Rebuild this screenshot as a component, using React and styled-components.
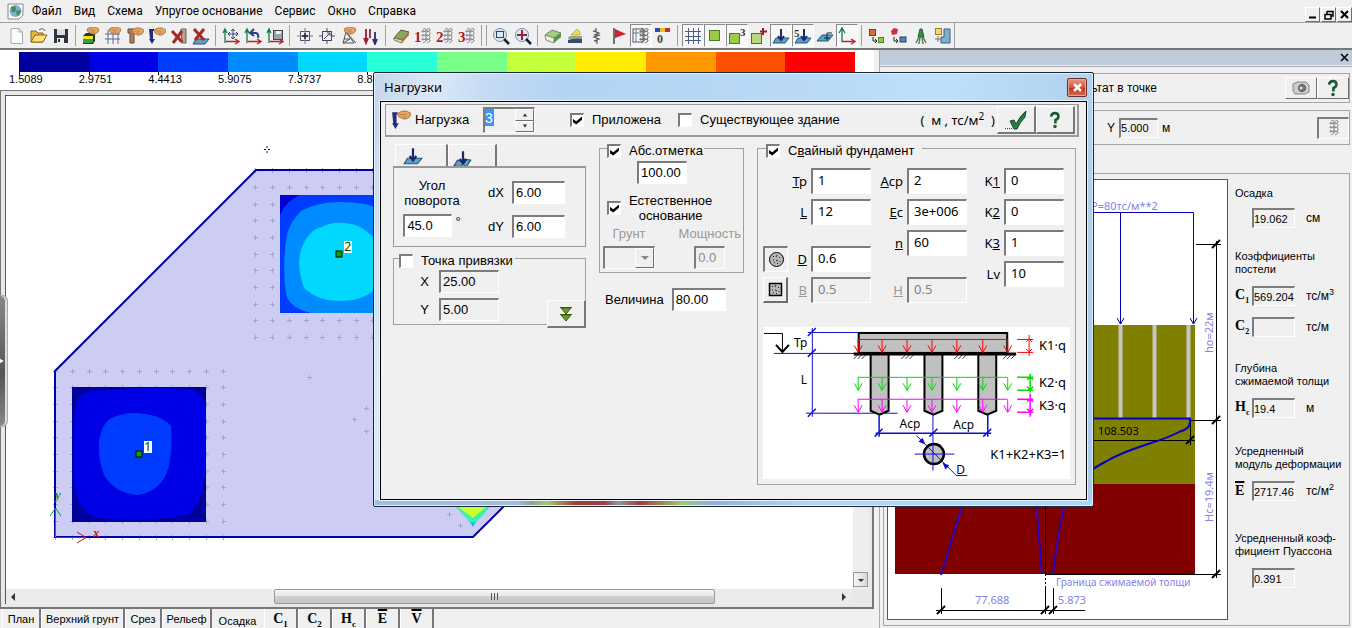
import React from 'react';
import styled, { createGlobalStyle, css } from 'styled-components';

const face = '#f0f0f0';
const sans = '"Liberation Sans", Arial, sans-serif';
const humanist = '"Noto Sans", "Segoe UI", sans-serif';

const GlobalStyle = createGlobalStyle`
  *, *::before, *::after { box-sizing: border-box; }
  body { margin: 0; background: ${face}; color: #000; font: 12px/14px ${sans}; overflow: hidden; }
  button, input, select { font: inherit; color: inherit; margin: 0; border-radius: 0; }
  svg { display: block; flex: none; }
`;

/* ---------- window chrome ---------- */

const Page = styled.div`
  position: relative;
  display: flex;
  flex-direction: column;
  height: 100vh;
`;

const MenuBar = styled.header`
  display: flex;
  align-items: center;
  height: 22px;
  padding-left: 7px;
  font: 12px/16px Roboto, "Segoe UI", sans-serif;
`;

const MenuList = styled.nav`
  display: flex;
  flex: 1;
  gap: 12px;
  margin-left: 8px;
`;

const MenuItem = styled.button`
  padding: 0;
  border: 0;
  background: none;
  white-space: nowrap;
`;

const WindowButtons = styled.div`
  display: flex;
  gap: 1px;
  align-self: flex-end;
`;

const raised = css`
  border: 1px solid;
  border-color: #fff #6e6e6e #6e6e6e #fff;
  background: ${face};
`;

const sunken = css`
  border-style: solid;
  border-width: 2px 1px 1px 2px;
  border-color: #7c7c7c #fff #fff #7c7c7c;
`;

const WindowButton = styled.button`
  ${raised}
  display: grid;
  place-items: center;
  width: 15px;
  height: 15px;
  padding: 0;
`;

const Toolbar = styled.div`
  display: flex;
  height: 28px;
  padding-left: 6px;
  border-top: 1px solid #a0a0a0;
  border-bottom: 2px solid #777;
`;

const ToolButton = styled.button`
  display: grid;
  place-items: center;
  width: 22px;
  height: 23px;
  margin-top: 1px;
  padding: 0;
  border: 1px solid transparent;
  background: none;
  ${(p) => p.$pressed && css`
    border-color: #8a8a8a #fff #fff #8a8a8a;
    background: #f7f7f7;
  `}
`;

const ToolSeparator = styled.i`
  width: ${(p) => (p.$wide ? '12px' : '8px')};
  padding: 2px 0;
  &::before {
    content: '';
    display: block;
    width: ${(p) => (p.$wide ? '6px' : '1px')};
    height: 21px;
    margin-left: 3px;
    border-left: 1px solid #a0a0a0;
    border-right: ${(p) => (p.$wide ? '1px solid #a0a0a0' : '0')};
  }
`;

const ToolEnd = styled.i`
  border-left: 1px solid #a0a0a0;
`;

/* ---------- workspace ---------- */

const Main = styled.main`
  display: flex;
  flex: 1;
  min-height: 0;
`;

const Workspace = styled.section`
  position: relative;
  display: flex;
  flex: 1;
  flex-direction: column;
  min-width: 0;
  padding-right: 5px;
`;

const Legend = styled.div`
  display: grid;
  grid-template-columns: repeat(12, 1fr);
  height: 40px;
  padding: 2px 19px 0;
  background: #fff;
`;

const LegendCell = styled.div`
  height: 20px;
  padding-top: 20px;
  background: ${(p) => p.$color};
`;

const LevelMark = styled.span`
  display: block;
  margin-left: -10px;
  background: linear-gradient(#000, #000) 10px 0 / 1px 3px no-repeat;
  font: 11px/14px ${sans};
`;

const PlanFrame = styled.div`
  display: flex;
  flex: 1;
  flex-direction: column;
  min-height: 0;
  padding: 4px 3px 3px 4px;
  border: solid #777;
  border-width: 1px 2px 2px 1px;
  background: #e8e8e8;
`;

const PlanView = styled.div`
  display: grid;
  grid-template-columns: 1fr 16px;
  grid-template-rows: 1fr 15px;
  flex: 1;
  min-height: 0;
  border: solid #555;
  border-width: 1px 0 0 1px;
`;

const PlanCanvas = styled.div`
  min-width: 0;
  min-height: 0;
  overflow: hidden;
  background: #fff;
`;

const VerticalScroll = styled.div`
  display: flex;
  align-items: flex-end;
  padding-bottom: 2px;
  background: #ededed;
`;

const ScrollArrow = styled.button`
  display: grid;
  place-items: center;
  width: ${(p) => (p.$framed ? '15px' : '14px')};
  height: 15px;
  padding: 0;
  border: ${(p) => (p.$framed ? '1px solid #989898' : '0')};
  background: ${(p) => (p.$framed ? 'linear-gradient(90deg, #f6f6f6, #d8d8d8)' : 'none')};
`;

const HorizontalScroll = styled.div`
  display: flex;
  justify-content: space-between;
  padding-right: 2px;
  background: #ebebeb;
`;

const ScrollTrack = styled.div`
  display: grid;
  grid-template-columns: 253fr 440fr 122fr;
  flex: 1;
`;

const ScrollThumb = styled.div`
  display: flex;
  grid-column: 2;
  align-items: center;
  justify-content: center;
  gap: 2px;
  border: 1px solid #989898;
  border-radius: 2px;
  background: linear-gradient(#f5f5f5, #e6e6e6 50%, #cfcfcf 50%, #c6c6c6);
`;

const Grip = styled.i`
  width: 1px;
  height: 7px;
  background: #555;
`;

const Tabs = styled.div`
  display: flex;
  height: 19px;
  padding-left: 2px;
  background: ${face};
`;

const Tab = styled.button`
  display: flex;
  align-items: center;
  justify-content: center;
  width: ${(p) => p.$width};
  padding: ${(p) => (p.$active ? '4px 0 0' : '1px 0 0')};
  border: solid;
  border-width: 0 2px 0 1px;
  border-color: ${(p) => (p.$active ? face : '#777 #777 #777 #fff')};
  background: ${face};
  white-space: nowrap;
  font: ${(p) => (p.$symbol ? 'bold 14px/16px "Liberation Serif", serif' : `11px/16px ${sans}`)};
  sub { font-size: 9px; line-height: 8px; align-self: flex-end; }
`;

const Overline = styled.span`
  text-decoration: overline;
  text-decoration-thickness: 2px;
`;

const Splitter = styled.button`
  position: absolute;
  top: 245px;
  left: 0;
  display: grid;
  place-items: center start;
  width: 8px;
  height: 132px;
  padding: 0;
  border: 1px solid #aaa;
  border-left: 0;
  border-radius: 0 6px 6px 0;
  box-shadow: inset -2px 0 #ddd;
  background: linear-gradient(#888, #555 60%, #888);
`;

/* ---------- result panel ---------- */

const Panel = styled.aside`
  display: flex;
  flex: 0 0 473px;
  flex-direction: column;
  min-width: 0;
  border-left: 1px solid #aaa;
  background: ${face};
`;

const PanelHeader = styled.div`
  display: flex;
  justify-content: flex-end;
  height: 15px;
  padding-right: 2px;
  background: #bfcbd9;
`;

const CloseButton = styled.button`
  display: grid;
  place-items: center;
  width: 11px;
  height: 15px;
  padding: 0;
  border: 0;
  background: none;
`;

const PanelBody = styled.div`
  display: flex;
  flex: 1;
  flex-direction: column;
  min-height: 0;
  margin-top: 1px;
  padding: 6px 2px 2px 3px;
  border-top: 1px solid #aaa;
`;

const PanelBar = styled.div`
  display: flex;
  align-items: center;
  justify-content: flex-end;
  height: ${(p) => p.$height};
  margin-bottom: ${(p) => p.$after};
  border: 1px solid #a5a5a5;
`;

const PanelTitle = styled.span`
  margin-right: 128px;
`;

const PanelButton = styled.button`
  ${raised}
  ${(p) => p.$pressed && sunken}
  display: grid;
  place-items: center;
  width: 32px;
  height: 22px;
  padding: 0;
`;

const Coordinate = styled.label`
  display: flex;
  align-items: center;
  gap: 4px;
  margin-right: auto;
  margin-left: 223px;
`;

const Readout = styled.input`
  ${sunken}
  width: ${(p) => p.$width || '43px'};
  height: 20px;
  padding: 0;
  background: ${face};
  font: 11px/16px ${sans};
`;

const ResultBox = styled.div`
  display: flex;
  flex: 1;
  min-height: 0;
  padding: 5px 0 5px 3px;
  border: 1px solid #a5a5a5;
`;

const PlotFrame = styled.div`
  flex: 1;
  min-width: 0;
  overflow: hidden;
  border: 1px solid #555;
  background: #fff;
`;

const Results = styled.div`
  display: flex;
  flex: 0 0 121px;
  flex-direction: column;
  padding: 8px 0 0 7px;
`;

const ResultGroup = styled.div`
  display: flex;
  flex-direction: column;
  margin-bottom: ${(p) => p.$after};
`;

const ResultTitle = styled.div`
  margin-bottom: ${(p) => (p.$tight ? '8px' : '10px')};
  font: 11px/13px ${sans};
  white-space: pre;
`;

const ResultRow = styled.label`
  display: grid;
  grid-template-columns: 17px 43px 1fr;
  align-items: center;
  height: 20px;
  & + & { margin-top: 11px; }
`;

const Symbol = styled.span`
  font: bold 14px/16px "Liberation Serif", serif;
  white-space: nowrap;
  sub { font-size: 8px; line-height: 8px; }
`;

const Unit = styled.span`
  padding-left: 11px;
  font: 12px/16px ${sans};
  white-space: nowrap;
  sup { font-size: 9px; line-height: 8px; }
`;

/* ---------- loads dialog ---------- */

const Dialog = styled.section`
  position: absolute;
  top: 72px;
  left: 373px;
  display: flex;
  flex-direction: column;
  width: 721px;
  padding: 0 6px 6px;
  border: 1px solid #1b2836;
  border-radius: 2px;
  box-shadow: inset 0 0 0 1px #dcf0ff;
  background:
    linear-gradient(90deg, #a3bbe0 0 20%, #8fa08f 22%, #a4c878 24%, #a03c3c 28% 32%, #8a9a9a 34%, #a03c3c 37%, #a4c878 43%, #8fb0dc 47%, #aed4f8 60% 100%) 0 100% / 100% 6px no-repeat,
    linear-gradient(100deg, #c5d6ea 0, #dbe9f8 8%, #c6dbf3 14%, #b4d4f3 24%, #b9d9f7 55%, #bfe0fb 72%, #a9c9e6 100%);
  font: 13px/16px ${sans};
`;

const DialogTitle = styled.header`
  display: flex;
  align-items: center;
  justify-content: space-between;
  height: 28px;
  padding-left: 4px;
  font: 13px/18px ${humanist};
`;

const DialogClose = styled.button`
  display: grid;
  place-items: center;
  width: 20px;
  height: 19px;
  padding: 0;
  border: 1px solid #6b2f2a;
  border-radius: 2px;
  box-shadow: inset 0 0 0 1px #eba292;
  background: linear-gradient(#e59a89, #d05538 50%, #bb3418 50%, #d96a50);
`;

const DialogBody = styled.form`
  height: 399px;
  padding: 2px 7px 0 4px;
  border: 1px solid #000;
  box-shadow: 0 0 0 1px #e8f4fc;
  background: ${face};
`;

const LoadBar = styled.div`
  display: flex;
  align-items: center;
  height: 33px;
  padding: 0 2px 0 5px;
  border: solid;
  border-width: 1px 2px 2px 1px;
  border-color: #999;
`;

const LoadNumber = styled.label`
  display: flex;
  align-items: center;
  gap: 4px;
  width: 179px;
`;

const SpinBox = styled.span`
  ${sunken}
  display: flex;
  align-items: flex-start;
  justify-content: space-between;
  width: 52px;
  height: 26px;
  margin-left: auto;
  margin-right: 35px;
`;

const SpinInput = styled.input`
  width: 9px;
  height: 17px;
  padding: 0;
  border: 0;
  background: #3a93ff;
  color: #fff;
  font: 14px/16px ${sans};
`;

const SpinButtons = styled.span`
  display: grid;
  grid-template-rows: 1fr 1fr;
  width: 19px;
  height: 23px;
`;

const SpinButton = styled.button`
  ${raised}
  display: grid;
  place-items: center;
  padding: 0;
`;

const Check = styled.label`
  display: flex;
  align-items: center;
  gap: 8px;
  margin-right: ${(p) => p.$after || '0'};
  white-space: nowrap;
  text-align: center;
`;

const Tick = styled.input.attrs({ type: 'checkbox' })`
  ${sunken}
  appearance: none;
  display: grid;
  place-items: center;
  flex: none;
  width: 14px;
  height: 14px;
  background: #fff;
  &:checked::before {
    content: '';
    width: 9px;
    height: 8px;
    background: #000;
    clip-path: polygon(0 30%, 36% 58%, 100% 0, 100% 40%, 36% 100%, 0 72%);
  }
`;

const UnitsNote = styled.span`
  margin-right: 2px;
  margin-left: auto;
  white-space: pre;
  font: 13px/18px ${humanist};
  sup { font-size: 10px; line-height: 10px; }
`;

const BarButton = styled.button`
  display: grid;
  place-items: center;
  width: 39px;
  height: 28px;
  padding: 0;
  border: solid;
  border-width: 1px 2px 2px 1px;
  border-color: #fff #777 #777 #fff;
  background: ${face};
`;

const DialogColumns = styled.div`
  display: grid;
  grid-template-columns: 193px 145px 1fr;
  gap: 13px;
  padding: 0 3px 0 8px;
`;

const Column = styled.div`
  position: relative;
  display: flex;
  flex-direction: column;
`;

const FormTabs = styled.div`
  display: flex;
  height: 29px;
  padding: 7px 0 0 2px;
`;

const FormTab = styled.button`
  display: grid;
  place-items: center;
  width: ${(p) => (p.$active ? '53px' : '49px')};
  padding: ${(p) => (p.$active ? '0 16px 0 0' : '4px 18px 0 0')};
  border: solid;
  border-width: 1px 2px 0 1px;
  border-color: #fff #777 #fff #fff;
  background: ${face};
`;

const FormPage = styled.div`
  display: flex;
  justify-content: space-between;
  height: 81px;
  padding: 10px 20px 0 2px;
  border: solid #999;
  border-width: 2px 1px 1px;
`;

const Angle = styled.label`
  display: flex;
  flex-direction: column;
  align-items: center;
  gap: 6px;
  width: 72px;
  line-height: 15px;
  text-align: center;
`;

const AngleValue = styled.span`
  display: flex;
  gap: 3px;
  line-height: 16px;
`;

const Stack = styled.div`
  display: flex;
  flex-direction: column;
  gap: ${(p) => p.$gap};
  padding-top: ${(p) => p.$before || '0'};
`;

const Field = styled.label`
  display: flex;
  align-items: center;
  justify-content: flex-end;
  gap: ${(p) => p.$gap || '8px'};
  white-space: nowrap;
`;

const TextBox = styled.input`
  ${sunken}
  width: ${(p) => p.$width};
  height: 23px;
  padding: 0 0 2px 2px;
  background: #fff;
  line-height: 16px;
  &:disabled, &:read-only { background: ${face}; }
  &:disabled { color: #8c8c8c; }
`;

const Group = styled.fieldset`
  min-width: 0;
  height: ${(p) => p.$height};
  margin: 0;
  padding: ${(p) => p.$pad};
  border: 1px solid #a0a0a0;
`;

const GroupLegend = styled.legend`
  height: 22px;
  margin-left: ${(p) => p.$inset};
  padding: 6px ${(p) => p.$after || '2px'} 0 0;
`;

const ExpandButton = styled(BarButton)`
  position: absolute;
  top: 163px;
  right: 0;
`;

const ElevationBody = styled.div`
  display: flex;
  flex-direction: column;
  align-items: flex-start;
  padding-top: 2px;
`;

const Elevation = styled(TextBox)`
  margin-left: 34px;
`;

const CheckBlock = styled.div`
  margin: 9px 0 4px 4px;
  line-height: 15px;
`;

const Soil = styled.div`
  display: flex;
  justify-content: space-between;
  align-self: stretch;
  padding-right: 2px;
`;

const SoilField = styled.label`
  display: flex;
  flex-direction: column;
  gap: 5px;
  align-items: center;
  line-height: 14px;
  color: #999;
`;

const SoilSelect = styled.select`
  ${sunken}
  appearance: none;
  width: 52px;
  height: 23px;
  background: ${face};
  opacity: 1;
`;

const SelectWrap = styled.span`
  display: grid;
  grid-template-columns: 1fr 20px;
  > select { grid-area: 1 / 1 / 2 / 3; }
  > i {
    ${raised}
    grid-area: 1 / 2;
    display: grid;
    place-items: center;
    margin: 2px 1px 1px 0;
    pointer-events: none;
  }
`;

const Magnitude = styled.div`
  display: flex;
  margin: 15px 0 0 6px;
`;

const PileFields = styled.div`
  display: flex;
  font: 13px/18px ${humanist};
`;

const PileColumn = styled.div`
  display: flex;
  flex-direction: column;
  gap: 5px;
  width: ${(p) => p.$width};
`;

const PileRow = styled.div`
  display: flex;
  align-items: center;
  height: 26px;
  margin-top: ${(p) => (p.$apart ? '16px' : '0')};
`;

const PileField = styled.label`
  display: flex;
  flex: 1;
  align-items: center;
  justify-content: flex-end;
  gap: 4px;
  color: ${(p) => (p.$muted ? '#999' : '#000')};
`;

const PileInput = styled.input`
  ${sunken}
  width: 60px;
  height: 26px;
  padding: 0 0 3px 5px;
  background: #fff;
  &:disabled { background: ${face}; color: #808080; }
`;

const ShapeButton = styled.button`
  ${raised}
  border-width: 1px 2px 2px 1px;
  ${(p) => p.$pressed && sunken}
  display: grid;
  place-items: center;
  width: 25px;
  height: 26px;
  padding: 0;
`;

const PileDiagram = styled.div`
  margin-top: 24px;
  background: #fff;
`;

/* ---------- toolbar icons ---------- */

const Hand = ({ x = 5, y = 0 }) => (
  <g transform={`translate(${x} ${y})`}>
    <path d="M0 2Q4-1 8 0L12 2 11 5Q8 8 5 7L1 5Z" fill="#e9a766" stroke="#9c602e" strokeWidth=".7" />
    <path d="M2 3L8 3M4 5L8 5" stroke="#b5763c" strokeWidth=".7" />
  </g>
);
const Spring = ({ x = 0, color = '#888' }) => (
  <path transform={`translate(${x} 1)`} d="M2 1Q6 0 5 2T1 4Q0 2 3 3T5 6T1 8Q0 6 3 7T5 10T1 12Q0 10 3 11T5 13T2 15" fill="none" stroke={color} />
);
const Axes = () => <path d="M3 16V3M1 6L3 2 5 6" fill="none" stroke="#167a45" strokeWidth="1.3" />;
const RedAxis = () => <path d="M4 14.5H16M13 12L17 14.5 13 17" fill="none" stroke="#c02030" strokeWidth="1.3" />;
const NumberSpring = ({ n }) => (
  <>
    <text x="0" y="15" fontFamily="Liberation Serif" fontWeight="bold" fontSize="15" fill="#b01828">{n}</text>
    <Spring x={7} /><Spring x={11} />
  </>
);
const Pane = ({ y = 0 }) => <path transform={`translate(0 ${y})`} d="M4 10H17L13 15H1Z" fill="#5e9fca" stroke="#25557c" />;
const GreenBox = ({ x, y, s }) => <rect x={x} y={y} width={s} height={s} fill="#9ccb4c" stroke="#4d7d1e" />;

const toolArt = {
  page: <path d="M3 1.5H11L14.5 5V16.5H3ZM11 1.5V5H14.5" fill="#fcfcfc" stroke="#aaa" />,
  open: <><path d="M1 15V4H6L8 6H13V15Z" fill="#e9b63c" stroke="#8b671a" /><path d="M1 15L5 8H17L13 15Z" fill="#ffdf7a" stroke="#8b671a" /><path d="M9 3Q13 0 15 4" fill="none" stroke="#555" /></>,
  save: <><rect x="2" y="2" width="14" height="14" fill="#30343d" /><rect x="5" y="2" width="8" height="6" fill="#d9dfe6" /><rect x="5" y="11" width="7" height="5" fill="#eee" /><rect x="6" y="12" width="2" height="3" fill="#333" /></>,
  layer: <><path d="M1 9L4 6H13V14L11 17H1Z" fill="#1f3b1f" /><rect x="1" y="9" width="10" height="3" fill="#f1e02b" /><rect x="1" y="12" width="10" height="4" fill="#3e9a42" /><Hand /></>,
  gridHand: <><path d="M4 3V17M9 7V17M14 7V17M1 7H16M1 12H16" stroke="#5a6d8a" /><Hand /></>,
  poleHand: <><path d="M2 2H8V16H4V6H2Z" fill="#b77a5c" stroke="#553" /><Hand x={6} y={1} /></>,
  pinHand: <><path d="M1 2H6V4H5V12H7L4 17 1 12H2Z" fill="#2b2b7d" /><Hand x={6} y={1} /></>,
  noPole: <><path d="M11 2H16V16H12Z" fill="#b9a08f" stroke="#665" /><path d="M2 4L12 15M12 4L3 16" stroke="#a82828" strokeWidth="3" /></>,
  noPane: <><Pane y={2} /><path d="M2 2L12 13M12 2L3 13" stroke="#a82828" strokeWidth="3" /></>,
  axisMove: <><Axes /><RedAxis /><path d="M11 2V12M6 7H16M9 4L11 2 13 4M9 10L11 12 13 10M8 5L6 7 8 9M14 5L16 7 14 9" fill="none" stroke="#2b4a7c" /></>,
  axisTurn: <><Axes /><RedAxis /><path d="M7 6H12Q15 7 14 11M10 2L6 6 10 9" fill="none" stroke="#24418d" strokeWidth="2" /></>,
  axisSave: <><Axes /><RedAxis /><rect x="7.5" y="3.5" width="9" height="9" fill="#9aa3ad" stroke="#444" /><rect x="10" y="4" width="5" height="3" fill="#eee" /></>,
  target: <><rect x="4.5" y="4.5" width="9" height="9" fill="none" stroke="#556" /><path d="M9 1V17M1 9H17" stroke="#778" /><path d="M6 9H12M9 6V12" stroke="#223" strokeWidth="1.5" /></>,
  scale: <><rect x="4.5" y="4.5" width="9" height="9" fill="none" stroke="#446" /><path d="M9 1V5M9 13V17M1 9H5M13 9H17M6 12L12 6M9 6H12V9" fill="none" stroke="#446" /></>,
  frameHand: <><path d="M3 16L6 5 14 16ZM4 12H10L3 16M6 5L16 16" fill="none" stroke="#555" /><Hand x={4} /></>,
  arrows: <><path d="M4 2V14M2 11L4 16 6 11M8 2V11" fill="none" stroke="#a01c2c" strokeWidth="1.8" /><path d="M13 5V15M11 12L13 17 15 12" fill="none" stroke="#2b2b7d" strokeWidth="1.8" /></>,
  eraser: <><path d="M2 11L9 3 17 5 11 13Z" fill="#8fa45c" stroke="#495a2b" /><path d="M2 11L10 13 10 16 2 13Z" fill="#e8e2c0" stroke="#776" /><path d="M10 13L17 5V8L10 16Z" fill="#a67748" /></>,
  s1: <NumberSpring n="1" />, s2: <NumberSpring n="2" />, s3: <NumberSpring n="3" />,
  zoomBox: <><circle cx="8" cy="8" r="6.5" fill="#dce8f6" stroke="#7890b0" /><rect x="4.5" y="4.5" width="7" height="6" fill="none" stroke="#345" /><path d="M12 12L17 17" stroke="#123" strokeWidth="2.5" /></>,
  zoomAll: <><circle cx="8" cy="8" r="6.5" fill="#dce8f6" stroke="#7890b0" /><path d="M8 3V13M3 8H13" stroke="#a02040" strokeWidth="2" /><path d="M12 12L17 17" stroke="#123" strokeWidth="2.5" /></>,
  block: <><path d="M1 8L8 3 17 6 10 11Z" fill="#a4cc86" stroke="#6b8b55" /><path d="M1 8L10 11V16L2 13Z" fill="#f1f1e4" stroke="#888" /><path d="M10 11L17 6V10L10 16Z" fill="#5c9250" /></>,
  strata: <><path d="M8 5L11 2 14 5V8H5Z" fill="#f4d94a" stroke="#887" strokeWidth=".6" /><path d="M3 9H16V12Q9 14 2 12Z" fill="#94a97c" /><path d="M2 13Q9 11 16 12V16H2Z" fill="#334a7b" /></>,
  coil: <path d="M8 1V4H5L11 6 6 8H12L6 10 11 12 6 14H9V17" fill="none" stroke="#555" strokeWidth="1.2" />,
  flag: <><path d="M4 1V17" stroke="#444" strokeWidth="1.5" /><path d="M5 2L16 7 5 11Z" fill="#d51e2e" /></>,
  springs: <><rect x="1" y="2" width="10" height="13" fill="none" stroke="#557" /><path d="M1 6H11M4 2V15" stroke="#778" /><Spring x={7} color="#666" /><Spring x={11} color="#666" /></>,
  scaleBar: <><rect x="1" y="1" width="5" height="4" fill="#3446b2" /><rect x="6" y="1" width="5" height="4" fill="#e3c42c" /><rect x="11" y="1" width="5" height="4" fill="#c83030" /><text x="3" y="16" fontFamily="Liberation Serif" fontWeight="bold" fontSize="12" fill="#444">0</text></>,
  grid: <path d="M4.5 1V17M9.5 1V17M14.5 1V17M1 4.5H17M1 9.5H17M1 13.5H17" stroke="#4a5a80" />,
  box: <GreenBox x={3.5} y={3.5} s={10} />,
  box3: <><GreenBox x={1.5} y={6.5} s={10} /><text x="12" y="9" fontSize="11" fontFamily="Liberation Serif" fontWeight="bold" fill="#333">3</text></>,
  boxPlus: <><rect x="1.5" y="6.5" width="10" height="10" fill="#b7d87f" stroke="#b33b22" /><path d="M13 1V8M10 4.5H17" stroke="#9b1c22" strokeWidth="2" /></>,
  load: <><Pane y={1} /><path d="M9 2V12M6 9L9 13 12 9" fill="none" stroke="#1b2a68" strokeWidth="2" /></>,
  splitLoad: <><path d="M4 10L8 11 10 9 16 10 12 16 9 14 6 16 1 15Z" fill="#5e9fca" stroke="#25557c" /><path d="M9 2V12M6 9L9 13 12 9" fill="none" stroke="#1b2a68" strokeWidth="2" /></>,
  load5: <><Pane y={1} /><text x="0" y="10" fontSize="11" fontFamily="Liberation Serif" fontWeight="bold" fill="#333">5</text><path d="M10 2V12M7 9L10 13 13 9" fill="none" stroke="#1b2a68" strokeWidth="2" /></>,
  pane: <><path d="M6 8H17L12 14H1Z" fill="#5e9fca" stroke="#25557c" /><path d="M8 11H14M11 6V13M11 6H16" stroke="#123" /></>,
  axes: <><path d="M4 15V2M1 6L4 1 7 6" fill="none" stroke="#167a45" strokeWidth="1.3" /><RedAxis /></>,
  swap1: <><rect x="1.5" y="2.5" width="6" height="6" fill="#d96c3c" stroke="#a22" /><path d="M5 10V14H9M7 12L9 14 7 16" fill="none" stroke="#222" /><GreenBox x={10.5} y={10.5} s={5} /></>,
  swap2: <><path d="M1 4L4 1 8 2 7 7 2 8Z" fill="#cf3040" /><path d="M4 10V14H8M6 12L8 14 6 16" fill="none" stroke="#222" /><rect x="10" y="10" width="6" height="5" fill="#4a8ab4" stroke="#245" /></>,
  brush: <><path d="M8 2H10L12 10H6Z" fill="#3d8a49" stroke="#25632f" /><path d="M7 10L4 16M8 10L7 17M10 10L11 17M11 10L14 16" stroke="#5d7f5a" strokeWidth="1.5" /></>,
  parts: <><rect x="1.5" y="1.5" width="6" height="6" fill="#f5d579" stroke="#a6772a" /><path d="M10 2H16V16H7V10H10Z" fill="#7fafcd" stroke="#35637f" /><path d="M4 9V15M1 12H7" stroke="#777" /></>,
};

const tools = [
  ['page', 'open', 'save'],
  ['layer', 'gridHand', 'poleHand', 'pinHand', 'noPole', 'noPane'],
  ['axisMove', 'axisTurn', 'axisSave'],
  ['target', 'scale', 'frameHand', 'arrows'],
  ['eraser', 's1', 's2', 's3'],
  ['zoomBox', 'zoomAll'],
  ['block', 'strata', 'coil', 'flag', 'springs', 'scaleBar'],
  ['grid', 'box', 'box3', 'boxPlus', 'load', 'load5', 'pane', 'axes'],
  ['swap1', 'swap2', 'brush', 'parts'],
];
const pressedTools = new Set(['springs', 'grid', 'box', 'box3', 'load', 'load5', 'axes']);

const Icon = ({ name, size = 18 }) => (
  <svg width={size} height={size} viewBox="0 0 18 18" aria-hidden="true">{toolArt[name]}</svg>
);

const Cross = ({ size = 9, width = 2, color = '#000' }) => (
  <svg width={size} height={size} viewBox="0 0 9 9"><path d="M1 1L8 8M8 1L1 8" stroke={color} strokeWidth={width} /></svg>
);

const Arrow = ({ d, color = '#333', size = 8 }) => (
  <svg width={size} height={size} viewBox="0 0 8 8"><path d={d} fill={color} /></svg>
);

const Question = () => (
  <svg width="12" height="18" viewBox="0 0 14 20">
    <path d="M2.5 6Q3 2 7 2T11 6Q11 9 7.5 10V14" fill="none" stroke="#1d5a35" strokeWidth="3" />
    <circle cx="7" cy="17.5" r="2" fill="#1d5a35" />
  </svg>
);

/* ---------- drawings ---------- */

const colors = ['#0000a0', '#0000e6', '#003cff', '#008cff', '#00d8ff', '#28ffd8', '#78ff88', '#c4ff3c', '#ffec00', '#ff9800', '#ff5000', '#ff0000'];
const levels = ['1.5089', '2.9751', '4.4413', '5.9075', '7.3737', '8.8'];

const gridPoints = [];
const lowerX = [55, 72, 89, 105, 122, 139, 156, 172, 189, 206, 223];
const lowerY = [371, 387, 404, 421, 437, 454, 471, 487, 504, 521, 537];
lowerY.forEach((y) => lowerX.forEach((x) => gridPoints.push([x, y])));
const upperX = [255, 272, 289, 306, 322, 339, 356, 372];
const upperY = [170, 187, 204, 220, 237, 254, 270, 287, 304, 320, 337];
upperY.forEach((y) => upperX.forEach((x) => gridPoints.push([x, y])));
gridPoints.push([309, 377], [366, 408], [354, 419], [366, 431], [449, 514], [460, 525]);

const Marker = ({ x, y, n }) => (
  <>
    <rect x={x - 3} y={y - 3} width="6" height="6" fill="#0a0" stroke="#000" />
    <rect x={x + 5} y={y - 13} width="8" height="12" fill="#fff" />
    <text x={x + 5} y={y - 3} fontFamily="Noto Sans" fontSize="13" fill="#065006">{n}</text>
  </>
);

const Plan = () => (
  <svg width="846" height="490" viewBox="6 96 846 490">
    <path d="M55 537V371L256 170H600V411L473 537Z" fill="#ccccf5" />
    {gridPoints.map(([x, y]) => (
      <path key={`${x}-${y}`} d={`M${x - 2} ${y + 0.5}H${x + 3}M${x + 0.5} ${y - 2}V${y + 3}`} stroke="#a4a4cc" />
    ))}
    <path d="M55 537V371L256 170H600V411L473 537Z" fill="none" stroke="#0000a8" strokeWidth="2" />
    <path d="M264 149.5H270M267 146V153" stroke="#0000a0" />
    <rect x="266" y="148" width="2" height="3" fill="#fff" />
    <rect x="72" y="387" width="134" height="135" fill="#00009c" />
    <path d="M92 391Q140 386 185 389Q204 389 205 410V470Q202 505 188 515Q140 523 92 517Q77 506 74 485Q72 440 76 405Q78 393 92 391Z" fill="#0000e6" />
    <path d="M136 413Q160 414 171 426Q173 460 165 477Q155 493 137 495Q115 493 104 475Q98 460 99 442Q102 422 112 418Q122 413 136 413Z" fill="#003cff" />
    <rect x="280" y="195" width="118" height="118" fill="#003cff" />
    <path d="M280 195H300Q287 200 280 215Z" fill="#0000d0" />
    <path d="M339 202Q365 202 376 208V313H312Q290 309 286 294Q282 265 287 235Q290 222 301 211Q318 202 339 202Z" fill="#008cff" />
    <path d="M343 223Q360 223 374 238V290Q362 301 340 301Q318 301 304 288Q296 265 301 250Q308 230 322 227Q332 222 343 223Z" fill="#00d8ff" />
    <path d="M456 507H490L473 526Z" fill="#3df0b0" />
    <path d="M458 507H486L473 518Z" fill="#c8ff30" />
    <path d="M470 522H476L473 527Z" fill="#10c8e8" />
    <Marker x={139} y={454} n="1" />
    <Marker x={339} y={254} n="2" />
    <path d="M55.5 537V508M50 516L55.5 508 61 516" fill="none" stroke="#0a9a2a" />
    <path d="M55 537.5H86M77 532L86 537.5 77 543" fill="none" stroke="#d01010" />
    <text x="55" y="499" fontFamily="Liberation Serif" fontStyle="italic" fontWeight="bold" fontSize="13" fill="#0a9a2a">y</text>
    <text x="93" y="537" fontFamily="Liberation Serif" fontStyle="italic" fontWeight="bold" fontSize="13" fill="#d01010">x</text>
  </svg>
);

const Ticks = ({ points, color = '#000', width = 2 }) => points.map(([x, y]) => (
  <path key={`${x}-${y}`} d={`M${x - 4} ${y + 4}L${x + 4} ${y - 4}`} stroke={color} strokeWidth={width} />
));

const SettlementPlot = () => (
  <svg width="340" height="440" viewBox="888 180 340 440" fontFamily="Noto Sans" fontSize="11" fill="#8484e8">
    <rect x="895" y="325" width="300" height="159" fill="#808000" />
    <rect x="895" y="484" width="300" height="90" fill="#800000" />
    <path d="M1120.5 325V418M1154.5 325V418M1188.5 325V418" stroke="#c8c4c0" strokeWidth="4" />
    <path d="M900 212.5H1193.5V324M1120.5 212V324M1117 318L1120.5 324 1124 318M1190 318L1193.5 324 1197 318" fill="none" stroke="#0000b8" />
    <text x="1091" y="210">P=80тс/м**2</text>
    <path d="M1196 244.5H1221M1216.5 241V578M1190 420.5H1221M1045 574.5H1221M1093 440.5H1195M1190.5 418V445" stroke="#000" />
    <path d="M900 418.5H1190V422Q1190 429 1179 432Q1170 437 1148 444Q1120 453 1105 462Q1090 470 1070 484" fill="none" stroke="#0000c8" strokeWidth="2" />
    <path d="M964 500L941 575M1036 500L1042 574M1066 500Q1058 530 1053 574" fill="none" stroke="#2800c0" strokeWidth="2" />
    <path d="M1045.5 500V574" stroke="#000" />
    <path d="M1045.5 574V588" stroke="#000" strokeDasharray="2 2" />
    <path d="M941.5 588V614M1045.5 588V614M1053.5 588V614M936 610.5H1085" stroke="#000" />
    <Ticks points={[[1216, 244], [1216, 420], [1216, 574], [1190, 440], [941, 610], [1045, 610], [1053, 610]]} />
    <text x="1098" y="435" fill="#000">108.503</text>
    <text x="1056" y="586" fontSize="10">Граница сжимаемой толщи</text>
    <text x="975" y="604">77.688</text>
    <text x="1058" y="604">5.873</text>
    <text transform="translate(1213 353) rotate(-90)">ho=22м</text>
    <text transform="translate(1213 522) rotate(-90)">Hc=19.4м</text>
  </svg>
);

const arrowXs = [858, 882, 907, 932, 957, 983, 1008];
const LoadLine = ({ y, color }) => (
  <path
    d={`M858 ${y}H1008${arrowXs.map((x) => `M${x + 0.5} ${y}V${y + 13}M${x - 3.5} ${y + 6}L${x + 0.5} ${y + 13} ${x + 4.5} ${y + 6}`).join('')}`}
    fill="none" stroke={color}
  />
);

const PileScheme = () => (
  <svg width="100%" height="152" viewBox="763 326 308 152" preserveAspectRatio="xMinYMin meet" fontFamily="Noto Sans" fontSize="12">
    <path d="M764 332.5H782.5V350" fill="none" stroke="#000" />
    <path d="M776 344L782.5 351 789 344" fill="none" stroke="#000" strokeWidth="2" />
    <path d="M808 331.5H858M774 352.5H855M806 412.5H898M812.5 327V416" stroke="#1010d0" />
    <Ticks points={[[812, 331], [812, 352], [812, 412], [879, 432], [934, 432], [988, 432]]} color="#1010d0" width={1.5} />
    <rect x="859" y="332" width="149" height="20" fill="#c0c0c0" stroke="#000" strokeWidth="2" />
    {[871, 925, 979].map((x) => (
      <path key={x} d={`M${x} 354V410L${x + 9} 414 ${x + 18} 410V354`} fill="#c0c0c0" stroke="#000" strokeWidth="2" />
    ))}
    <path d="M854 353H1017" stroke="#000" strokeWidth="3" />
    {[854, 902, 955, 1004].map((x) => (
      <path key={x} d={`M${x} 358L${x + 4} 354M${x + 4} 358L${x + 8} 354M${x + 8} 358L${x + 12} 354`} stroke="#000" strokeWidth=".8" />
    ))}
    <LoadLine y={338.5} color="#f00" />
    <LoadLine y={376.5} color="#0d0" />
    <LoadLine y={398.5} color="#f0f" />
    <path d="M1018 338.5H1034M1018 351.5H1034M1030 334V355M1027 341L1030 338 1033 341M1027 348L1030 351 1033 348" fill="none" stroke="#f00" />
    <path d="M1018 376.5H1034M1018 389.5H1034M1031 373V392M1028 379L1031 376 1034 379M1028 386L1031 389 1034 386" fill="none" stroke="#0d0" strokeWidth="1.5" />
    <path d="M1018 398.5H1034M1018 411.5H1034M1031 393V416M1028 401L1031 398 1034 401M1028 408L1031 411 1034 408" fill="none" stroke="#f0f" strokeWidth="1.5" />
    <circle cx="934.5" cy="453.5" r="10" fill="#c0c0c0" stroke="#000" strokeWidth="2.5" />
    <path d="M876 432.5H992M879.5 414V436M988.5 414V436" stroke="#1010d0" strokeWidth="1.5" />
    <path d="M933.5 412V470M915 453.5H955M917 435L957 475H968" fill="none" stroke="#1010d0" />
    <path d="M926 444L919 441 923 437ZM943 462L950 465 946 469Z" fill="#1010d0" />
    <text x="794" y="346">Tp</text>
    <text x="801" y="383">L</text>
    <text x="900" y="427">Acp</text>
    <text x="954" y="428">Acp</text>
    <text x="957" y="473">D</text>
    <g fontSize="13">
      <text x="1040" y="349">K1·q</text>
      <text x="1040" y="386">K2·q</text>
      <text x="1040" y="409">K3·q</text>
      <text x="991" y="458">K1+K2+K3=1</text>
    </g>
  </svg>
);

const SectionShape = ({ round }) => (
  <svg width="17" height="17" viewBox="0 0 17 17">
    {round ? <circle cx="8.5" cy="8.5" r="7" fill="#b8b8b8" stroke="#000" /> : <rect x="2.5" y="2.5" width="12" height="12" fill="#b8b8b8" stroke="#000" strokeWidth="1.5" />}
    <path d="M5 5L6 6M9 4L8 6M12 6L11 7M5 9H6M8 9L10 10M12 10V11M6 12L7 11M10 13L9 12" stroke="#222" />
  </svg>
);

/* ---------- composition ---------- */

const Pile = ({ mark, rest = '', before = '', value, disabled }) => (
  <PileField $muted={disabled}>
    <span>{before}<u>{mark}</u>{rest}</span>
    <PileInput defaultValue={value} disabled={disabled} />
  </PileField>
);

const Result = ({ symbol, value, unit }) => (
  <ResultRow>
    <Symbol>{symbol}</Symbol>
    <Readout readOnly value={value} />
    <Unit>{unit}</Unit>
  </ResultRow>
);

const LoadsDialog = () => (
  <Dialog role="dialog" aria-labelledby="loads-title">
    <DialogTitle>
      <span id="loads-title">Нагрузки</span>
      <DialogClose aria-label="Закрыть"><Cross size={9} width={2.5} color="#fff" /></DialogClose>
    </DialogTitle>
    <DialogBody onSubmit={(e) => e.preventDefault()}>
      <LoadBar>
        <LoadNumber>
          <Icon name="pinHand" size={20} />
          Нагрузка
          <SpinBox>
            <SpinInput defaultValue="3" />
            <SpinButtons>
              <SpinButton type="button" aria-label="Больше"><Arrow size={6} d="M4 2L7 6H1Z" /></SpinButton>
              <SpinButton type="button" aria-label="Меньше"><Arrow size={6} d="M1 2H7L4 6Z" /></SpinButton>
            </SpinButtons>
          </SpinBox>
        </LoadNumber>
        <Check $after="17px"><Tick defaultChecked />Приложена</Check>
        <Check><Tick />Существующее здание</Check>
        <UnitsNote>{'(  м , тс/м'}<sup>2</sup>{'  )'}</UnitsNote>
        <BarButton type="submit" aria-label="Применить">
          <svg width="26" height="22" viewBox="0 0 26 22"><path d="M7 12L11 11 13 15Q17 7 23 2L22 8Q17 13 14 20H11Z" fill="#2a7a45" stroke="#174a29" /><path d="M2 19.5H9" stroke="#444" strokeDasharray="1 1" /></svg>
        </BarButton>
        <BarButton type="button" aria-label="Справка"><Question /></BarButton>
      </LoadBar>

      <DialogColumns>
        <Column>
          <FormTabs>
            <FormTab type="button" $active aria-label="Прямоугольник"><Icon name="load" size={20} /></FormTab>
            <FormTab type="button" aria-label="Контур"><Icon name="splitLoad" size={20} /></FormTab>
          </FormTabs>
          <FormPage>
            <Angle>
              <span>Угол<br />поворота</span>
              <AngleValue><TextBox $width="49px" defaultValue="45.0" />°</AngleValue>
            </Angle>
            <Stack $gap="11px" $before="3px">
              <Field>dX<TextBox $width="53px" defaultValue="6.00" /></Field>
              <Field>dY<TextBox $width="53px" defaultValue="6.00" /></Field>
            </Stack>
          </FormPage>
          <Group $height="78px" $pad="0 86px 0 0">
            <GroupLegend $inset="5px"><Check><Tick />Точка привязки</Check></GroupLegend>
            <Stack $gap="5px" $before="1px">
              <Field $gap="10px">X<TextBox $width="60px" readOnly value="25.00" /></Field>
              <Field $gap="10px">Y<TextBox $width="60px" readOnly value="5.00" /></Field>
            </Stack>
          </Group>
          <ExpandButton type="button" aria-label="Развернуть">
            <svg width="14" height="16" viewBox="0 0 14 16"><path d="M1 1.5H13M1 8.5H13" stroke="#3d5c14" /><path d="M2 2H12L7 8ZM2 9H12L7 15Z" fill="#6f9a2b" stroke="#3d5c14" /></svg>
          </ExpandButton>
        </Column>

        <Column>
          <Group $height="136px" $pad="0 0 0 3px">
            <GroupLegend $inset="4px" $after="1px"><Check><Tick defaultChecked />Абс.отметка</Check></GroupLegend>
            <ElevationBody>
              <Elevation $width="50px" defaultValue="100.00" aria-label="Абс.отметка" />
              <CheckBlock><Check><Tick defaultChecked /><span>Естественное<br />основание</span></Check></CheckBlock>
              <Soil>
                <SoilField>Грунт
                  <SelectWrap><SoilSelect disabled /><i><Arrow color="#888" d="M0 2H8L4 6Z" /></i></SelectWrap>
                </SoilField>
                <SoilField>Мощность<TextBox $width="31px" disabled defaultValue="0.0" /></SoilField>
              </Soil>
            </ElevationBody>
          </Group>
          <Magnitude><Field>Величина<TextBox $width="54px" defaultValue="80.00" /></Field></Magnitude>
        </Column>

        <Group $height="348px" $pad="9px 5px 0">
          <GroupLegend $inset="3px" $after="8px"><Check><Tick defaultChecked /><span>С<u>в</u>айный фундамент</span></Check></GroupLegend>
          <PileFields>
            <PileColumn $width="108px">
              <PileRow><Pile mark="T" rest="p" value="1" /></PileRow>
              <PileRow><Pile mark="L" value="12" /></PileRow>
              <PileRow $apart>
                <ShapeButton type="button" $pressed aria-label="Круглое сечение"><SectionShape round /></ShapeButton>
                <Pile mark="D" value="0.6" />
              </PileRow>
              <PileRow>
                <ShapeButton type="button" aria-label="Прямоугольное сечение"><SectionShape /></ShapeButton>
                <Pile mark="B" value="0.5" disabled />
              </PileRow>
            </PileColumn>
            <PileColumn $width="96px">
              <PileRow><Pile mark="A" rest="cp" value="2" /></PileRow>
              <PileRow><Pile mark="E" rest="c" value="3e+006" /></PileRow>
              <PileRow><Pile mark="n" value="60" /></PileRow>
              <PileRow $apart><Pile mark="H" value="0.5" disabled /></PileRow>
            </PileColumn>
            <PileColumn $width="97px">
              <PileRow><Pile before="K" mark="1" value="0" /></PileRow>
              <PileRow><Pile before="K" mark="2" value="0" /></PileRow>
              <PileRow><Pile before="K" mark="3" value="1" /></PileRow>
              <PileRow><Pile before="Lv" value="10" /></PileRow>
            </PileColumn>
          </PileFields>
          <PileDiagram><PileScheme /></PileDiagram>
        </Group>
      </DialogColumns>
    </DialogBody>
  </Dialog>
);

export default function App() {
  return (
    <Page>
      <GlobalStyle />
      <MenuBar>
        <svg width="17" height="17" viewBox="0 0 17 17">
          <path d="M1 1H16V12L12 16H1Z" fill="#fff" stroke="#888" />
          <circle cx="8.5" cy="8" r="6" fill="#7fb0d0" /><path d="M4 4Q9 2 9 6T5 9ZM9 8L14 7Q13 12 10 13Z" fill="#4d8a55" />
        </svg>
        <MenuList>
          {['Файл', 'Вид', 'Схема', 'Упругое основание', 'Сервис', 'Окно', 'Справка'].map((t) => <MenuItem key={t}>{t}</MenuItem>)}
        </MenuList>
        <WindowButtons>
          <WindowButton aria-label="Свернуть"><svg width="9" height="9"><path d="M1 7.5H8" stroke="#000" strokeWidth="2" /></svg></WindowButton>
          <WindowButton aria-label="Восстановить"><svg width="10" height="10"><path d="M3 1.5H9V6H7M3 1V4M1 4.5H7V9H1Z" fill="none" stroke="#000" strokeWidth="1.5" /></svg></WindowButton>
          <WindowButton aria-label="Закрыть"><Cross /></WindowButton>
        </WindowButtons>
      </MenuBar>

      <Toolbar>
        {tools.map((group, i) => (
          <React.Fragment key={group[0]}>
            {i > 0 && <ToolSeparator $wide={i === 5} />}
            {group.map((name) => (
              <ToolButton key={name} $pressed={pressedTools.has(name)} aria-label={name}><Icon name={name} /></ToolButton>
            ))}
          </React.Fragment>
        ))}
        <ToolEnd />
      </Toolbar>

      <Main>
        <Workspace>
          <Legend>
            {colors.map((c, i) => (
              <LegendCell key={c} $color={c}>{levels[i] && <LevelMark>{levels[i]}</LevelMark>}</LegendCell>
            ))}
          </Legend>
          <PlanFrame>
            <PlanView>
              <PlanCanvas><Plan /></PlanCanvas>
              <VerticalScroll><ScrollArrow $framed aria-label="Вниз"><Arrow d="M1 3H7L4 6Z" /></ScrollArrow></VerticalScroll>
              <HorizontalScroll>
                <ScrollArrow aria-label="Влево"><Arrow d="M6 0V8L2 4Z" /></ScrollArrow>
                <ScrollTrack><ScrollThumb><Grip /><Grip /><Grip /></ScrollThumb></ScrollTrack>
                <ScrollArrow aria-label="Вправо"><Arrow d="M2 0V8L6 4Z" /></ScrollArrow>
              </HorizontalScroll>
            </PlanView>
          </PlanFrame>
          <Tabs>
            <Tab $width="39px">План</Tab>
            <Tab $width="84px">Верхний грунт</Tab>
            <Tab $width="37px">Срез</Tab>
            <Tab $width="50px">Рельеф</Tab>
            <Tab $width="52px" $active>Осадка</Tab>
            <Tab $width="34px" $symbol>C<sub>1</sub></Tab>
            <Tab $width="34px" $symbol>C<sub>2</sub></Tab>
            <Tab $width="34px" $symbol>H<sub>c</sub></Tab>
            <Tab $width="34px" $symbol><Overline>E</Overline></Tab>
            <Tab $width="34px" $symbol><Overline>V</Overline></Tab>
          </Tabs>
          <Splitter aria-label="Показать панель"><Arrow size={6} color="#fff" d="M0 1L5 4 0 7Z" /></Splitter>
        </Workspace>

        <Panel>
          <PanelHeader><CloseButton aria-label="Закрыть панель"><Cross width={1.5} /></CloseButton></PanelHeader>
          <PanelBody>
            <PanelBar $height="30px" $after="7px">
              <PanelTitle>Результат в точке</PanelTitle>
              <PanelButton aria-label="Снимок">
                <svg width="18" height="14" viewBox="0 0 18 14"><path d="M1 3L5 1H14L17 4V11L13 13H3L1 10Z" fill="#ccc" stroke="#888" /><circle cx="10" cy="7" r="3.5" fill="#777" stroke="#555" /><circle cx="9" cy="7" r="1.5" fill="#ddd" /></svg>
              </PanelButton>
              <PanelButton aria-label="Справка"><Question /></PanelButton>
            </PanelBar>
            <PanelBar $height="35px" $after="28px">
              <Coordinate>Y<Readout $width="39px" readOnly value="5.000" /><span>м</span></Coordinate>
              <PanelButton $pressed aria-label="Основание"><svg width="18" height="18"><Spring x={4} /><Spring x={8} /></svg></PanelButton>
            </PanelBar>
            <ResultBox>
              <PlotFrame><SettlementPlot /></PlotFrame>
              <Results>
                <ResultGroup $after="22px"><ResultTitle $tight>Осадка</ResultTitle><Result value="19.062" unit="см" /></ResultGroup>
                <ResultGroup $after="25px">
                  <ResultTitle>{'Коэффициенты\nпостели'}</ResultTitle>
                  <Result symbol={<>C<sub>1</sub></>} value="569.204" unit={<>тс/м<sup>3</sup></>} />
                  <Result symbol={<>C<sub>2</sub></>} value="" unit="тс/м" />
                </ResultGroup>
                <ResultGroup $after="27px">
                  <ResultTitle>{'Глубина\nсжимаемой толщи'}</ResultTitle>
                  <Result symbol={<>H<sub>c</sub></>} value="19.4" unit="м" />
                </ResultGroup>
                <ResultGroup $after="31px">
                  <ResultTitle>{'Усредненный\nмодуль деформации'}</ResultTitle>
                  <Result symbol={<Overline>E</Overline>} value="2717.46" unit={<>тс/м<sup>2</sup></>} />
                </ResultGroup>
                <ResultGroup><ResultTitle>{'Усредненный коэф-\nфициент Пуассона'}</ResultTitle><Result value="0.391" /></ResultGroup>
              </Results>
            </ResultBox>
          </PanelBody>
        </Panel>
      </Main>
      <LoadsDialog />
    </Page>
  );
}
